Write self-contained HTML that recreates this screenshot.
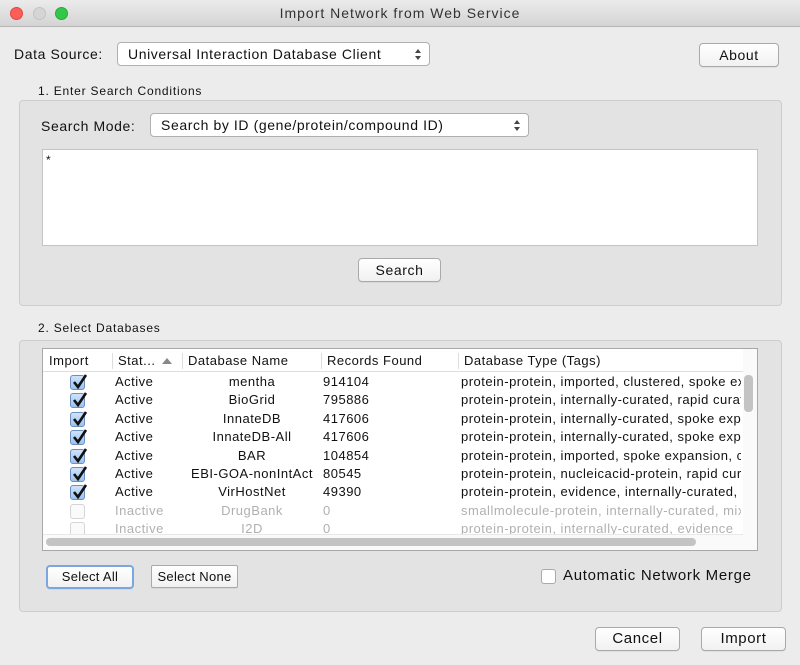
<!DOCTYPE html>
<html><head><style>
*{box-sizing:border-box;margin:0;padding:0}
body{width:800px;height:665px;background:#ececec;font-family:"Liberation Sans",sans-serif;font-size:13px;color:#111;position:relative;overflow:hidden;letter-spacing:0.6px}
.a{position:absolute}
.btn{position:absolute;background:linear-gradient(#fff,#f1f1f1);border:1px solid #a9a9a9;border-radius:4px;text-align:center;font-size:14px;line-height:22px;box-shadow:0 1px 0 rgba(0,0,0,.05)}
.combo{position:absolute;background:#fff;border:1px solid #b0b0b0;border-radius:4px;font-size:14px;line-height:22px;padding-left:10px}
.combo:after{content:"";position:absolute;right:8px;top:6px;width:0;height:0;border-left:3px solid transparent;border-right:3px solid transparent;border-bottom:4px solid #444}
.combo:before{content:"";position:absolute;right:8px;top:13px;width:0;height:0;border-left:3px solid transparent;border-right:3px solid transparent;border-top:4px solid #444}
.panel{position:absolute;background:#e3e3e3;border:1px solid #cdcdcd;border-radius:4px}
.row{position:absolute;left:0;width:700px;height:18.4px;font-size:13px;line-height:18px;letter-spacing:0.5px}
.row span{position:absolute;white-space:nowrap;overflow:hidden}
.cb{position:absolute;left:27px;top:2px;width:15px;height:15px;border-radius:3px;background:linear-gradient(#cfe3fb,#9cc2f0);border:1px solid #6a8fc0}
.cb svg{position:absolute;left:0;top:-3px}
.in{color:#b0b0b0}
.in .cb{background:#fafafa;border:1px solid #d5d5d5}
.sm{font-size:12px;letter-spacing:0.8px}
</style></head><body>
<div class="a" style="left:0;top:0;width:800px;height:27px;background:linear-gradient(#ebebeb,#d4d4d4);border-bottom:1px solid #b5b5b5"></div>
<div class="a" style="left:10px;top:7px;width:13px;height:13px;border-radius:50%;background:#fc5f57;border:1px solid #df4744"></div>
<div class="a" style="left:33px;top:7px;width:13px;height:13px;border-radius:50%;background:#d5d5d5;border:1px solid #c3c3c3"></div>
<div class="a" style="left:55px;top:7px;width:13px;height:13px;border-radius:50%;background:#33c748;border:1px solid #27aa35"></div>
<div class="a" style="left:0;width:800px;top:5px;text-align:center;font-size:14px;color:#333;letter-spacing:1px">Import Network from Web Service</div>

<div class="a" style="left:14px;top:46px;font-size:14px">Data Source:</div>
<div class="combo" style="left:117px;top:42px;width:313px;height:24px">Universal Interaction Database Client</div>
<div class="btn" style="left:699px;top:43px;width:80px;height:24px">About</div>

<div class="a sm" style="left:38px;top:84px">1. Enter Search Conditions</div>
<div class="panel" style="left:19px;top:100px;width:763px;height:206px"></div>
<div class="a" style="left:41px;top:118px;font-size:14px">Search Mode:</div>
<div class="combo" style="left:150px;top:113px;width:379px;height:24px">Search by ID (gene/protein/compound ID)</div>
<div class="a" style="left:42px;top:149px;width:716px;height:97px;background:#fff;border:1px solid #c4c4c4;padding:3px 3px;font-size:12px">*</div>
<div class="btn" style="left:358px;top:258px;width:83px;height:24px">Search</div>

<div class="a sm" style="left:38px;top:321px">2. Select Databases</div>
<div class="panel" style="left:19px;top:340px;width:763px;height:272px"></div>
<div class="a" style="left:42px;top:348px;width:716px;height:203px;background:#fff;border:1px solid #a8a8a8;overflow:hidden">
 <div class="a" style="left:0;top:0;width:700px;height:23px;background:#fff;border-bottom:1px solid #ddd;font-size:13px;line-height:23px;letter-spacing:0.5px">
  <span class="a" style="left:6px">Import</span>
  <span class="a" style="left:69px;border-left:1px solid #ddd;padding-left:5px;height:16px;top:4px;line-height:16px">Stat...</span>
  <span class="a" style="left:119px;top:9px;width:0;height:0;border-left:5px solid transparent;border-right:5px solid transparent;border-bottom:6px solid #888"></span>
  <span class="a" style="left:139px;border-left:1px solid #ddd;padding-left:5px;height:16px;top:4px;line-height:16px">Database Name</span>
  <span class="a" style="left:278px;border-left:1px solid #ddd;padding-left:5px;height:16px;top:4px;line-height:16px">Records Found</span>
  <span class="a" style="left:415px;border-left:1px solid #ddd;padding-left:5px;height:16px;top:4px;line-height:16px">Database Type (Tags)</span>
 </div>
 <div class="a" style="left:0;top:24px;width:700px;height:180px">
  <div class="row" style="top:0"><div class="cb"><svg width="17" height="17" viewBox="0 0 17 17"><path d="M3 9l4 5L15 2" stroke="#111" stroke-width="2.6" fill="none"/></svg></div><span style="left:72px">Active</span><span style="left:140px;width:138px;text-align:center">mentha</span><span style="left:280px">914104</span><span style="left:418px;width:280px">protein-protein, imported, clustered, spoke expansion</span></div>
  <div class="row" style="top:18.4px"><div class="cb"><svg width="17" height="17" viewBox="0 0 17 17"><path d="M3 9l4 5L15 2" stroke="#111" stroke-width="2.6" fill="none"/></svg></div><span style="left:72px">Active</span><span style="left:140px;width:138px;text-align:center">BioGrid</span><span style="left:280px">795886</span><span style="left:418px;width:280px">protein-protein, internally-curated, rapid curation</span></div>
  <div class="row" style="top:36.8px"><div class="cb"><svg width="17" height="17" viewBox="0 0 17 17"><path d="M3 9l4 5L15 2" stroke="#111" stroke-width="2.6" fill="none"/></svg></div><span style="left:72px">Active</span><span style="left:140px;width:138px;text-align:center">InnateDB</span><span style="left:280px">417606</span><span style="left:418px;width:280px">protein-protein, internally-curated, spoke expansion</span></div>
  <div class="row" style="top:55.2px"><div class="cb"><svg width="17" height="17" viewBox="0 0 17 17"><path d="M3 9l4 5L15 2" stroke="#111" stroke-width="2.6" fill="none"/></svg></div><span style="left:72px">Active</span><span style="left:140px;width:138px;text-align:center">InnateDB-All</span><span style="left:280px">417606</span><span style="left:418px;width:280px">protein-protein, internally-curated, spoke expansion</span></div>
  <div class="row" style="top:73.6px"><div class="cb"><svg width="17" height="17" viewBox="0 0 17 17"><path d="M3 9l4 5L15 2" stroke="#111" stroke-width="2.6" fill="none"/></svg></div><span style="left:72px">Active</span><span style="left:140px;width:138px;text-align:center">BAR</span><span style="left:280px">104854</span><span style="left:418px;width:280px">protein-protein, imported, spoke expansion, clustered</span></div>
  <div class="row" style="top:92px"><div class="cb"><svg width="17" height="17" viewBox="0 0 17 17"><path d="M3 9l4 5L15 2" stroke="#111" stroke-width="2.6" fill="none"/></svg></div><span style="left:72px">Active</span><span style="left:140px;width:138px;text-align:center">EBI-GOA-nonIntAct</span><span style="left:280px">80545</span><span style="left:418px;width:280px">protein-protein, nucleicacid-protein, rapid curation</span></div>
  <div class="row" style="top:110.4px"><div class="cb"><svg width="17" height="17" viewBox="0 0 17 17"><path d="M3 9l4 5L15 2" stroke="#111" stroke-width="2.6" fill="none"/></svg></div><span style="left:72px">Active</span><span style="left:140px;width:138px;text-align:center">VirHostNet</span><span style="left:280px">49390</span><span style="left:418px;width:280px">protein-protein, evidence, internally-curated, mixed</span></div>
  <div class="row in" style="top:128.8px"><div class="cb"></div><span style="left:72px">Inactive</span><span style="left:140px;width:138px;text-align:center">DrugBank</span><span style="left:280px">0</span><span style="left:418px;width:280px">smallmolecule-protein, internally-curated, mixed</span></div>
  <div class="row in" style="top:147.2px"><div class="cb"></div><span style="left:72px">Inactive</span><span style="left:140px;width:138px;text-align:center">I2D</span><span style="left:280px">0</span><span style="left:418px;width:280px">protein-protein, internally-curated, evidence</span></div>
 </div>
 <div class="a" style="left:0;top:185px;width:700px;height:16px;background:#fafafa;border-top:1px solid #e8e8e8"></div>
 <div class="a" style="left:3px;top:189px;width:650px;height:8px;border-radius:4px;background:#c3c3c3"></div>
 <div class="a" style="left:700px;top:0;width:15px;height:202px;background:#fafafa"></div>
 <div class="a" style="left:701px;top:26px;width:9px;height:37px;border-radius:4px;background:#c3c3c3"></div>
</div>

<div class="btn" style="left:46px;top:565px;width:88px;height:24px;font-size:13px;border:2px solid #7aa7e0;line-height:20px;letter-spacing:0.3px">Select All</div>
<div class="btn" style="left:151px;top:565px;width:87px;height:23px;font-size:13px;line-height:21px;border-radius:2px;letter-spacing:0.3px">Select None</div>
<div class="a" style="left:541px;top:569px;width:15px;height:15px;border:1px solid #aaa;border-radius:3px;background:#fff"></div>
<div class="a" style="left:563px;top:567px;font-size:15px;letter-spacing:0.7px">Automatic Network Merge</div>

<div class="btn" style="left:595px;top:627px;width:85px;height:24px;font-size:15px">Cancel</div>
<div class="btn" style="left:701px;top:627px;width:85px;height:24px;font-size:15px">Import</div>
</body></html>
